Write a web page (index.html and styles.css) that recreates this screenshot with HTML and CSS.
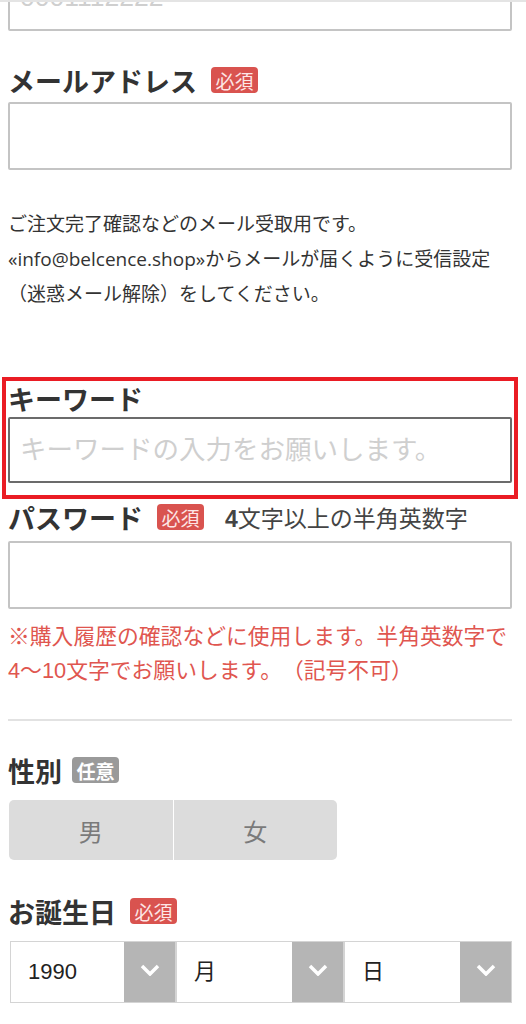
FILE: index.html
```html
<!DOCTYPE html>
<html lang="ja">

<head>
  <meta charset="UTF-8">
  <meta name="viewport" content="width=device-width, initial-scale=1.0">
  <title>会員登録</title>
  <link rel="stylesheet" href="styles.css">
</head>

<body>
  <div class="topline"></div>

  <form class="member-form">
    <!-- 電話番号（スクロールで上部が切れている） -->
    <input class="text-input" type="tel" placeholder="0001112222">

    <div class="field field-email">
      <div class="field-label">メールアドレス<span class="badge badge-required">必須</span></div>
      <input class="text-input" type="email">
    </div>

    <p class="help">ご注文完了確認などのメール受取用です。<br>«info@belcence.shop»からメールが届くように受信設定<br>（迷惑メール解除）をしてください。</p>

    <div class="field field-keyword">
      <div class="field-label">キーワード</div>
      <input class="text-input is-focused" type="text" placeholder="キーワードの入力をお願いします。">
    </div>

    <div class="field field-password">
      <div class="field-label">パスワード<span class="badge badge-required">必須</span><span class="label-hint"><b>4</b>文字以上の半角英数字</span></div>
      <input class="text-input" type="password">
    </div>

    <p class="note">※購入履歴の確認などに使用します。半角英数字で<br>4〜10文字でお願いします。（記号不可）</p>

    <hr class="divider">

    <div class="field field-gender">
      <div class="field-label">性別<span class="badge badge-optional">任意</span></div>
      <div class="choice">
        <button type="button" class="choice-item">男</button>
        <button type="button" class="choice-item">女</button>
      </div>
    </div>

    <div class="field field-birthday">
      <div class="field-label">お誕生日<span class="badge badge-required">必須</span></div>
      <div class="date-row">
        <div class="selects">
          <div class="select">
            <span class="select-value">1990</span>
            <span class="select-arrow"><svg width="20" height="12" viewBox="0 0 20 12"><polyline points="2,2 10,10 18,2" fill="none" stroke="#fff" stroke-width="3.5" /></svg></span>
          </div>
          <div class="select">
            <span class="select-value">月</span>
            <span class="select-arrow"><svg width="20" height="12" viewBox="0 0 20 12"><polyline points="2,2 10,10 18,2" fill="none" stroke="#fff" stroke-width="3.5" /></svg></span>
          </div>
          <div class="select">
            <span class="select-value">日</span>
            <span class="select-arrow"><svg width="20" height="12" viewBox="0 0 20 12"><polyline points="2,2 10,10 18,2" fill="none" stroke="#fff" stroke-width="3.5" /></svg></span>
          </div>
        </div>
        <div class="scroll-thumb"></div>
      </div>
    </div>
  </form>
</body>

</html>
```

FILE: styles.css
```css
* {
  box-sizing: border-box;
  margin: 0;
  padding: 0;
}

body {
  background: #fff;
  color: #333;
  font-family: 'Liberation Sans', 'Noto Sans CJK JP', sans-serif;
  text-spacing-trim: space-all;
  overflow: hidden;
}

.topline {
  position: relative;
  z-index: 1;
  height: 2px;
  background: #e4e4e4;
}

.member-form {
  width: 504px;
  margin: -39px 0 0 8px;
}

/* 入力欄 */
.text-input {
  display: block;
  width: 100%;
  height: 68px;
  padding: 0 10px;
  border: 2px solid #c4c4c4;
  border-radius: 2px;
  background: #fff;
  font-family: inherit;
  font-size: 26.5px;
  color: #333;
  outline: none;
}

.text-input::placeholder {
  color: #cfcfcf;
}

.text-input.is-focused {
  height: 66px;
  border-color: #6b6b6b;
}

/* ラベル */
.field-label {
  display: flex;
  align-items: center;
  height: 36px;
  margin-bottom: 4px;
  font-family: 'Noto Sans CJK JP', sans-serif;
  font-size: 27px;
  font-weight: 700;
  color: #333;
}

.badge {
  display: inline-flex;
  align-items: center;
  justify-content: center;
  width: 47px;
  height: 26px;
  margin-left: 14px;
  border-radius: 4px;
  font-size: 19px;
  color: #fff;
}

.badge-required {
  background: #d9534f;
  font-weight: 400;
  color: #fde6e6;
}

.badge-optional {
  margin-left: 10px;
  background: #9a9a9a;
  font-weight: 700;
}

.label-hint {
  margin-left: 21px;
  font-family: 'Liberation Sans', 'Noto Sans CJK JP', sans-serif;
  font-size: 23px;
  font-weight: 400;
  color: #444;
}

.field-email {
  margin-top: 31px;
}

.help {
  margin-top: 37px;
  font-family: 'Open Sans', 'Noto Sans CJK JP', sans-serif;
  font-size: 19px;
  line-height: 35px;
  color: #333;
  white-space: nowrap;
}

/* 強調枠 */
.field-keyword {
  margin-top: 71px;
  padding-bottom: 10px;
  outline: 4px solid #ea1c24;
  outline-offset: 2px;
}

.field-keyword .field-label {
  height: 30px;
}

.field-password {
  margin-top: 6px;
}

.field-password .field-label {
  margin-bottom: 6px;
}

.note {
  margin-top: 11px;
  font-size: 21.8px;
  line-height: 34px;
  color: #e0564f;
  white-space: nowrap;
}

.divider {
  margin-top: 31px;
  border: none;
  height: 2px;
  background: #e2e2e2;
}

/* 性別 */
.field-gender {
  margin-top: 31px;
}

.choice {
  display: flex;
  width: 328px;
  height: 60px;
  margin: 12px 0 0 1px;
  border-radius: 5px;
  overflow: hidden;
  gap: 1px;
  background: #fff;
}

.choice-item {
  flex: 1;
  border: none;
  background: #dcdcdc;
  font-family: 'Noto Sans CJK JP', sans-serif;
  font-size: 24px;
  color: #7a7a7a;
}

/* 生年月日 */
.field-birthday {
  margin-top: 33px;
}

.date-row {
  display: flex;
  align-items: flex-start;
  margin-top: 12px;
}

.selects {
  display: grid;
  grid-template-columns: repeat(3, 1fr);
  width: 504px;
  flex-shrink: 0;
}

.select {
  display: flex;
  height: 62px;
  border: 1px solid #d4d4d4;
  background: #fff;
}

.select:first-child {
  margin-left: 2px;
}

.select-value {
  flex: 1;
  padding-left: 17px;
  font-size: 22px;
  line-height: 60px;
  color: #222;
}

.select-arrow {
  display: flex;
  align-items: center;
  justify-content: center;
  width: 51px;
  padding-bottom: 4px;
  background: #b5b5b5;
}

.scroll-thumb {
  width: 4px;
  height: 50px;
  margin: 1px 0 0 5px;
  border-radius: 2px;
  background: #e2e2e2;
}
```
